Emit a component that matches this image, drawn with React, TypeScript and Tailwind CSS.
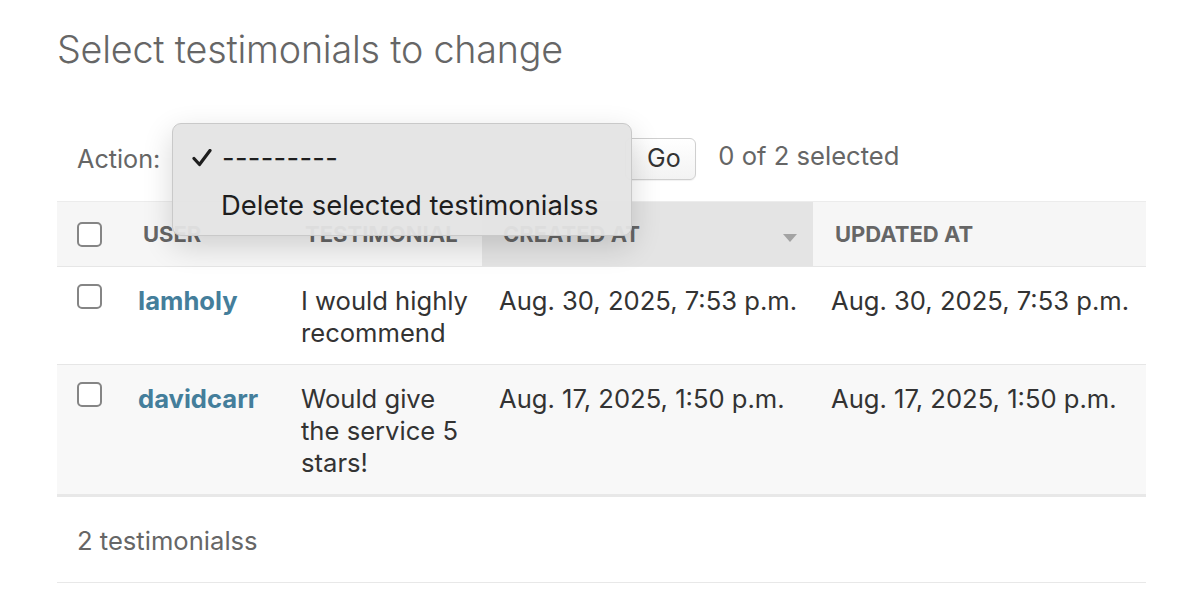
import React from "react";

function Checkbox() {
  return <div className="w-[25px] h-[25px] rounded-[5px] border-2 border-[#858585] bg-white" />;
}

export default function App() {
  return (
    <div className="w-[1192px] h-[614px] bg-white relative overflow-hidden font-['Inter',sans-serif]">
      <div className="pl-[57px] pr-[46px]">
        <h1 className="pt-[27px] text-[37.7px] leading-[44px] font-light text-[#666] tracking-[-0.2px]">
          Select testimonials to change
        </h1>

        <div className="mt-[67px] h-[42px] flex items-center pl-[20px] text-[25.2px] text-[#666]">
          <span className="leading-[32px]">Action:</span>
          <div className="w-[461px] ml-[8px] h-[42px]" />
          <button className="h-[42px] w-[71px] -ml-[4px] rounded-[6px] border border-[#cfcfcf] bg-gradient-to-b from-white to-[#f3f3f3] text-[#333] text-[25px] flex items-center justify-center pl-[6px] shadow-[0_1px_1px_rgba(0,0,0,0.06)]">
            Go
          </button>
          <span className="ml-[22px] -mt-[6px] leading-[32px] text-[25.6px]">0 of 2 selected</span>
        </div>

        <div className="mt-[21px] border-t border-[#ececec]">
          <div className="grid grid-cols-[64px_163px_198px_331px_333px] h-[65px] bg-[#f6f6f6] border-b border-[#e6e6e6] text-[22px] font-bold uppercase text-[#666]">
            <div className="flex items-center pl-[20px]">
              <Checkbox />
            </div>
            <div className="flex items-center pl-[22px]">User</div>
            <div className="flex items-center pl-[21px]">Testimonial</div>
            <div className="flex items-center pl-[21px] pr-[16px] bg-[#e4e4e4] justify-between">
              <span>Created at</span>
              <svg width="14" height="8" viewBox="0 0 14 8" className="mt-[8px]">
                <path d="M0 0 L14 0 L7 8 Z" fill="#a3a3a3" />
              </svg>
            </div>
            <div className="flex items-center pl-[22px]">Updated at</div>
          </div>

          <div className="grid grid-cols-[64px_163px_198px_331px_333px] bg-white border-b border-[#e6e6e6] text-[25.6px] leading-[32px] text-[#333]">
            <div className="pl-[20px] pt-[17px]">
              <Checkbox />
            </div>
            <div className="pl-[17px] pt-[18px] pb-[15px] font-bold text-[#447e9b]">Iamholy</div>
            <div className="pl-[17px] pr-[8px] pt-[18px] pb-[15px]">I would highly recommend</div>
            <div className="pl-[17px] pt-[18px] pb-[15px]">Aug. 30, 2025, 7:53 p.m.</div>
            <div className="pl-[18px] pt-[18px] pb-[15px]">Aug. 30, 2025, 7:53 p.m.</div>
          </div>

          <div className="grid grid-cols-[64px_163px_198px_331px_333px] bg-[#f8f8f8] text-[25.6px] leading-[32px] text-[#333]">
            <div className="pl-[20px] pt-[17px]">
              <Checkbox />
            </div>
            <div className="pl-[17px] pt-[18px] pb-[15px] font-bold text-[#447e9b]">davidcarr</div>
            <div className="pl-[17px] pr-[8px] pt-[18px] pb-[15px]">Would give the service 5 stars!</div>
            <div className="pl-[17px] pt-[18px] pb-[15px]">Aug. 17, 2025, 1:50 p.m.</div>
            <div className="pl-[18px] pt-[18px] pb-[15px]">Aug. 17, 2025, 1:50 p.m.</div>
          </div>

          <div className="border-t-[3px] border-[#e8e8e8] h-[89px] border-b flex items-center pl-[20px] pt-[3px] text-[25.6px] text-[#666]">
            2 testimonialss
          </div>
        </div>
      </div>

      <div className="absolute left-[172px] top-[123px] w-[460px] h-[113px] rounded-[9px] bg-[#e4e4e4]/95 border border-[#c9c9c9] shadow-[0_10px_30px_rgba(0,0,0,0.16)] text-[27.4px] text-[#1e1e1e]">
        <div className="flex items-center h-[32px] mt-[18px]">
          <svg width="20" height="18" viewBox="0 0 20 18" className="ml-[19px] mr-[10px]">
            <path d="M2 9.5 L7.5 15.5 L18 1.5" fill="none" stroke="#1e1e1e" strokeWidth="3.2" strokeLinecap="round" strokeLinejoin="round" />
          </svg>
          <span className="leading-[32px] tracking-[0.3px]">---------</span>
        </div>
        <div className="flex items-center h-[32px] mt-[15px] pl-[48px] leading-[32px]">Delete selected testimonialss</div>
      </div>
    </div>
  );
}
